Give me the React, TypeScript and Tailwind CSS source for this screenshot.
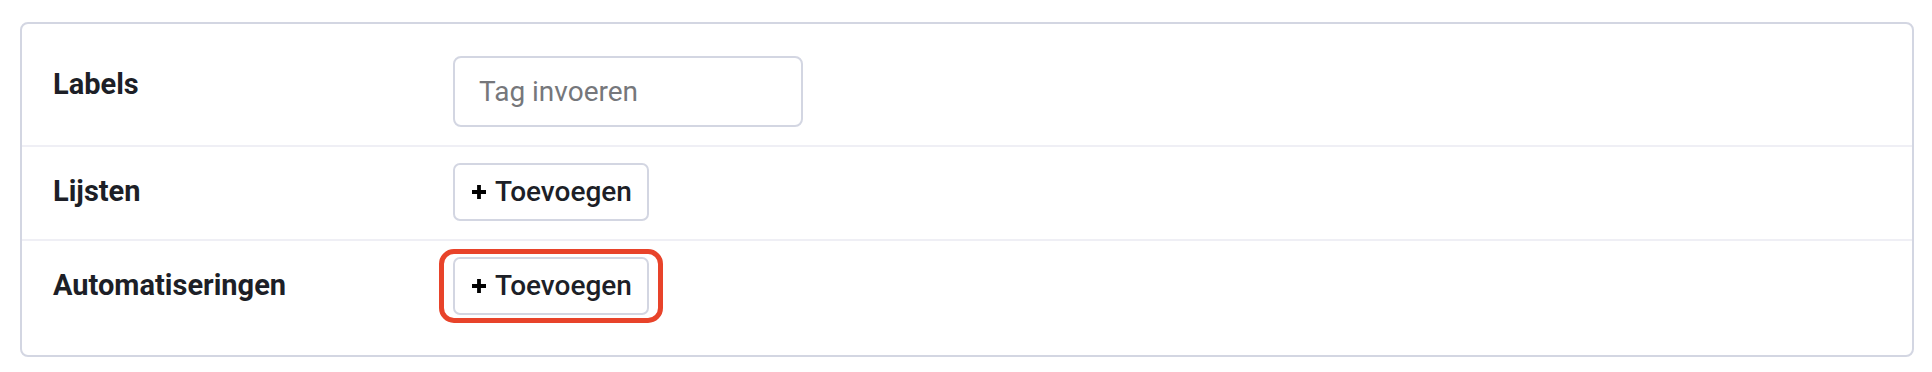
import React from 'react';

const PlusIcon: React.FC = () => (
  <svg width="16" height="16" viewBox="0 0 16 16" className="shrink-0">
    <path d="M8 1v14M1 8h14" stroke="#000" strokeWidth="3.8" strokeLinecap="butt" />
  </svg>
);

const AddButton: React.FC = () => (
  <button
    type="button"
    className="flex h-[58px] items-center gap-2 rounded-[7px] border-2 border-[#d3d6e2] bg-white pl-4 pr-[15px] text-[28px] font-medium text-[#1d1f27]"
  >
    <PlusIcon />
    <span>Toevoegen</span>
  </button>
);

const Row: React.FC<{ label: string; last?: boolean; children: React.ReactNode }> = ({
  label,
  last,
  children,
}) => (
  <div
    className={`flex items-start pt-4 pb-[18px] pl-[31px] ${
      last ? '' : 'border-b-2 border-[#efeff5]'
    }`}
  >
    <div className="flex h-[58px] w-[400px] shrink-0 items-center text-[29px] font-bold text-[#1d1f27]">
      {label}
    </div>
    {children}
  </div>
);

export default function App() {
  return (
    <div
      className="h-[372px] w-[1932px] bg-white pt-[22px] pl-5"
      style={{ fontFamily: 'Roboto, "Noto Sans", sans-serif' }}
    >
      <div className="w-[1894px] rounded-[8px] border-2 border-[#d3d6e2] pt-4 pb-[14px]">
        <Row label="Labels">
          <input
            type="text"
            placeholder="Tag invoeren"
            className="h-[71px] w-[350px] rounded-[8px] border-2 border-[#d3d6e2] bg-white px-6 text-[28px] text-[#1d1f27] outline-none placeholder:text-[#76777b]"
          />
        </Row>
        <Row label="Lijsten">
          <AddButton />
        </Row>
        <Row label="Automatiseringen" last>
          <div className="-mt-2 -ml-[14px] rounded-[15px] border-[5px] border-[#e8432a] px-[9px] py-[3px]">
            <AddButton />
          </div>
        </Row>
      </div>
    </div>
  );
}
